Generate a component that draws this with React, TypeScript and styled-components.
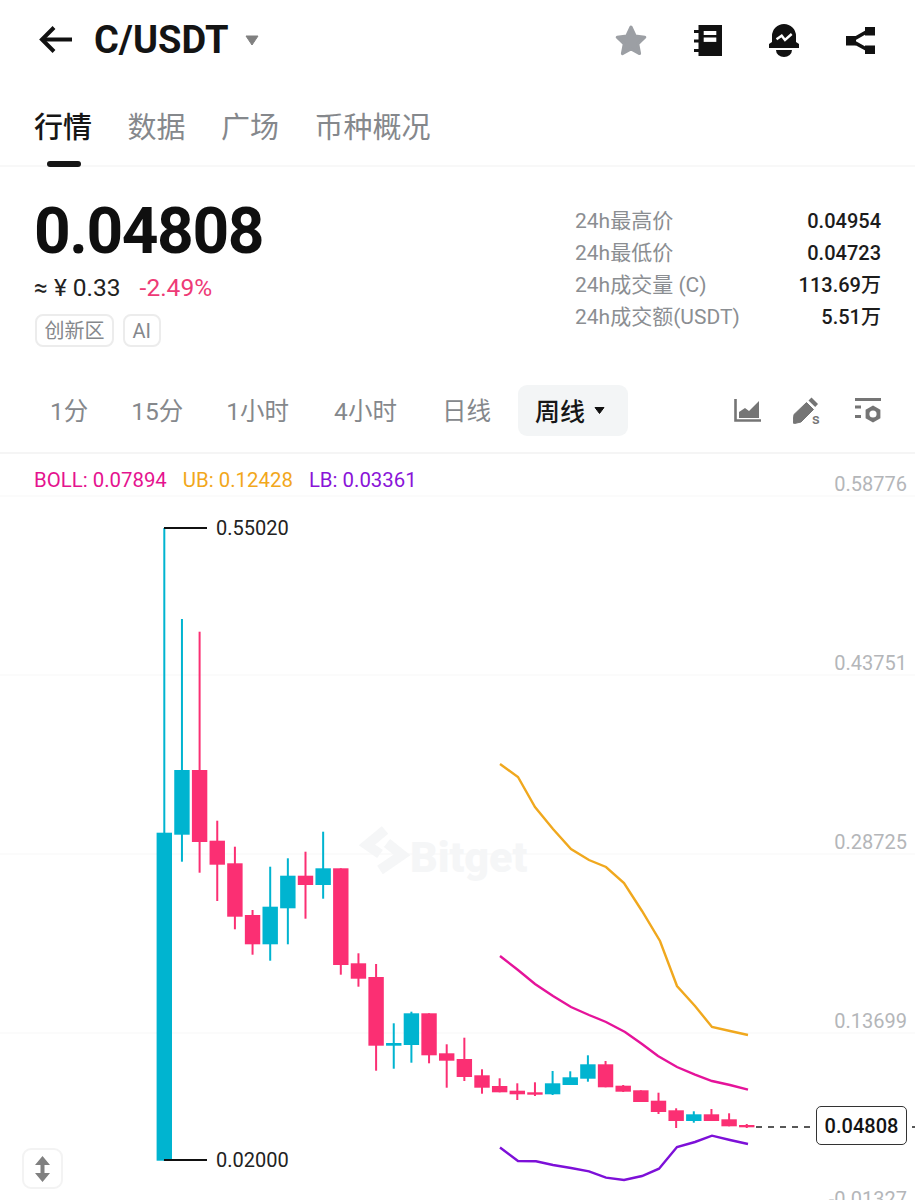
import React from "react";
import styled, { createGlobalStyle } from "styled-components";

const Global = createGlobalStyle`
  html, body { margin: 0; padding: 0; background: #fff; height: 1200px; overflow: hidden; }
  * { box-sizing: border-box; }
  body { font-family: Roboto, "Noto Sans CJK SC", sans-serif; }
`;

const Page = styled.div`
  width: 915px;
  height: 1200px;
  overflow: hidden;
  display: flex;
  flex-direction: column;
  color: #111;
  background: #fff;
`;

const Header = styled.header`
  height: 80px;
  flex: none;
  padding: 0 40px 0 38px;
  display: flex;
  align-items: center;
  justify-content: space-between;
`;
const TitleGroup = styled.div`
  display: flex;
  align-items: center;
`;
const Title = styled.h1`
  margin: 0 17px 0 21px;
  font: 700 38px/1 Roboto, sans-serif;
  color: #141414;
`;
const HeaderIcons = styled.div`
  display: flex;
  align-items: center;
  gap: 47px;
`;

const Tabs = styled.nav`
  height: 87px;
  flex: none;
  padding: 6px 0 0 34px;
  display: flex;
  gap: 35.5px;
  align-items: center;
  border-bottom: 2px solid #f8f8f8;
`;
const Tab = styled.span<{ $active?: boolean }>`
  position: relative;
  font: 500 29px/1 "Noto Sans CJK SC", sans-serif;
  color: ${(p) => (p.$active ? "#161616" : "#85888c")};
  font-weight: ${(p) => (p.$active ? 500 : 400)};
  ${(p) =>
    p.$active
      ? `&::after {
    content: "";
    position: absolute;
    left: 13px;
    bottom: -27px;
    width: 34px;
    height: 6px;
    border-radius: 3px;
    background: #161616;
  }`
      : ""}
`;

const Summary = styled.section`
  height: 205px;
  flex: none;
  padding: 0 34px 0 34px;
  display: flex;
  justify-content: space-between;
`;
const PriceColumn = styled.div`
  display: flex;
  flex-direction: column;
`;
const BigPrice = styled.div`
  margin-top: 33px;
  font: 700 64px/1 Roboto, sans-serif;
  letter-spacing: -1.4px;
  color: #0f0f0f;
`;
const SubRow = styled.div`
  margin-top: 9px;
  display: flex;
  gap: 19px;
  font: 400 24.5px/30px Roboto, sans-serif;
`;
const Fiat = styled.span`
  color: #222;
`;
const Change = styled.span`
  color: #ee3a76;
`;
const TagRow = styled.div`
  margin: 11px 0 0 1px;
  display: flex;
  gap: 9px;
`;
const Tag = styled.span`
  height: 33px;
  padding: 0 7.5px;
  display: flex;
  align-items: center;
  border: 2px solid #ececec;
  border-radius: 8px;
  font: 400 20px/1 Roboto, "Noto Sans CJK SC", sans-serif;
  color: #85888c;
`;
const Stats = styled.div`
  width: 306px;
  margin-top: 38px;
  display: grid;
  grid-template-columns: 1fr auto;
  grid-auto-rows: 32px;
  align-items: center;
`;
const StatLabel = styled.span`
  font: 400 21px/1 Roboto, "Noto Sans CJK SC", sans-serif;
  color: #8b8e92;
`;
const StatValue = styled.span`
  text-align: right;
  font: 500 20px/1 Roboto, "Noto Sans CJK SC", sans-serif;
  color: #1c1c1c;
`;

const Intervals = styled.div`
  height: 82px;
  flex: none;
  display: flex;
  align-items: flex-start;
  padding: 13px 34px 0 50px;
  border-bottom: 2px solid #f5f5f5;
`;
const Interval = styled.span<{ $gap: number }>`
  height: 51px;
  padding-top: 4px;
  margin-right: ${(p) => p.$gap}px;
  display: flex;
  align-items: center;
  font: 400 24.5px/1 Roboto, "Noto Sans CJK SC", sans-serif;
  color: #85888c;
`;
const ActiveInterval = styled.span`
  width: 110px;
  height: 51px;
  padding-left: 17px;
  gap: 9px;
  display: flex;
  align-items: center;
  background: #f3f5f6;
  border-radius: 9px;
  font: 500 25px/1 "Noto Sans CJK SC", sans-serif;
  color: #161616;
`;
const ToolIcons = styled.div`
  margin-left: auto;
  height: 51px;
  display: flex;
  align-items: center;
  gap: 32px;
`;

const Chart = styled.section`
  position: relative;
  flex: 1;
  min-height: 0;
`;
const Plot = styled.svg`
  position: absolute;
  inset: 0;
  display: block;
`;
const Legend = styled.div`
  position: relative;
  padding: 14px 0 0 34px;
  display: flex;
  gap: 16px;
  font: 400 20.4px/24px Roboto, sans-serif;
`;
const LegendItem = styled.span<{ $color: string }>`
  color: ${(p) => p.$color};
`;
const AxisLabel = styled.span<{ $y: number }>`
  position: absolute;
  right: 8px;
  top: ${(p) => p.$y - 455 - 10}px;
  font: 400 20px/24px Roboto, sans-serif;
  color: #b4b6b9;
`;
const ExtremeLabel = styled.span<{ $y: number }>`
  position: absolute;
  left: 216px;
  top: ${(p) => p.$y - 455 - 11}px;
  font: 400 20px/24px Roboto, sans-serif;
  color: #222;
`;
const PriceTag = styled.span`
  position: absolute;
  left: 816px;
  top: 652px;
  width: 91px;
  height: 39px;
  display: flex;
  align-items: center;
  justify-content: center;
  background: #fff;
  border: 1.5px solid #333;
  border-radius: 5px;
  font: 500 20px/1 Roboto, sans-serif;
  color: #141414;
`;
const Watermark = styled.span`
  position: absolute;
  left: 410px;
  top: 378px;
  font: 900 43px/50px Roboto, sans-serif;
  color: #f5f6f7;
`;
const ScaleButton = styled.button`
  position: absolute;
  left: 22px;
  top: 694px;
  width: 41px;
  height: 41px;
  padding: 0;
  display: flex;
  align-items: center;
  justify-content: center;
  background: #fff;
  border: 2px solid #f3f3f3;
  border-radius: 9px;
`;

const UP = "#00b4d0";
const DOWN = "#fb2f73";
type Candle = [number, number, number, number, number];
// isUp, wick top, body top, body bottom, wick bottom
const candles: Candle[] = [
  [1, 528, 832.7, 1160.7, 1160.7],
  [1, 619, 770, 834.7, 861.7],
  [0, 631.7, 770, 842, 872.7],
  [0, 820.7, 840.7, 864.7, 901],
  [0, 846.7, 863.3, 916.7, 929.3],
  [0, 910, 915, 944.3, 954.7],
  [1, 866.7, 906.7, 944.3, 960.7],
  [1, 858.3, 875.7, 908.3, 944.3],
  [0, 851.7, 875.7, 885, 918.7],
  [1, 831.7, 868.3, 885, 898.7],
  [0, 868.3, 868.3, 965, 974.7],
  [0, 953.3, 963.3, 978.7, 986.7],
  [0, 964, 977, 1045.7, 1070.7],
  [1, 1023.3, 1043, 1045.7, 1068.7],
  [1, 1011.7, 1013.3, 1045, 1062.7],
  [0, 1013.3, 1013.3, 1055.3, 1063.3],
  [0, 1044.3, 1053.3, 1060.7, 1087.7],
  [0, 1037.7, 1059, 1077, 1081],
  [0, 1069.3, 1075.3, 1087.7, 1093.7],
  [0, 1078.3, 1086, 1092.3, 1092.3],
  [0, 1083.3, 1090.7, 1094.3, 1100],
  [0, 1082.3, 1092.3, 1094.7, 1096],
  [1, 1071, 1083.3, 1094.3, 1095],
  [1, 1071.3, 1077.3, 1085, 1085],
  [1, 1055.3, 1064.3, 1078.7, 1081.7],
  [0, 1061, 1064.3, 1087.3, 1087.3],
  [0, 1085, 1085.7, 1091.7, 1092],
  [0, 1090.3, 1090.3, 1102, 1102],
  [0, 1092.7, 1100.7, 1112, 1114],
  [0, 1108.3, 1110.3, 1121, 1128],
  [1, 1111.3, 1114.3, 1121, 1122.7],
  [0, 1109, 1114.3, 1121, 1121],
  [0, 1113.3, 1119.3, 1126.3, 1126.3],
  [0, 1124, 1125, 1127.3, 1128],
];

const orange =
  "500,764 518,777 535,807 553,829 571,849 589,860 606,867 624,883 642,911 660,941 677,986 695,1006 712,1027 730,1031 748,1035";
const magenta =
  "500,956 518,970 535,984 553,996 571,1007 589,1015 606,1022 625,1032 642,1044 658,1056 677,1067 695,1074.6 712,1081 730,1085 748,1089.7";
const purple =
  "500,1147.5 518,1161 536,1161.3 553,1165 571,1168 589,1171.3 606,1177.7 624,1180 642,1176 659,1168.7 677,1147 695,1142 712,1135.7 730,1140 748,1144";

const BackIcon = () => (
  <svg width="35" height="30" viewBox="0 0 35 30" fill="none" stroke="#111" strokeWidth="4">
    <path d="M34 14.5H5" />
    <path d="M16 2.5L4 14.5L16 26.5" />
  </svg>
);
const TitleCaret = () => (
  <svg width="14" height="11" viewBox="0 0 14 11">
    <path d="M1 1H13L7 10Z" fill="#808080" stroke="#808080" strokeLinejoin="round" />
  </svg>
);
const StarIcon = () => (
  <svg width="32" height="31" viewBox="0 0 32 31">
    <path
      d="M16 2L20.2 11L29.8 12.2L22.8 19L24.6 28.6L16 24L7.4 28.6L9.2 19L2.2 12.2L11.8 11Z"
      fill="#9c9fa4"
      stroke="#9c9fa4"
      strokeWidth="3"
      strokeLinejoin="round"
    />
  </svg>
);
const NotebookIcon = () => (
  <svg width="28" height="31" viewBox="0 0 28 31">
    <path d="M4.5 0H28V31H4.5V27H0V24H4.5V17.5H0V14.5H4.5V8H0V5H4.5Z" fill="#111" />
    <rect x="9.7" y="6" width="12.6" height="4" fill="#fff" />
    <rect x="9.7" y="12.5" width="12.6" height="4.4" fill="#fff" />
  </svg>
);
const BellIcon = () => (
  <svg width="30" height="33" viewBox="0 0 30 33">
    <path d="M3 18V12A12 12 0 0 1 27 12V18L30 20V24H0V20Z" fill="#111" />
    <path d="M7.5 15.2L12.7 11.7L16 16L22.7 10" fill="none" stroke="#fff" strokeWidth="2.4" />
    <path d="M7 26H23A8 7 0 0 1 7 26Z" fill="#111" />
  </svg>
);
const ShareIcon = () => (
  <svg width="29" height="27" viewBox="0 0 29 27">
    <rect x="0" y="9" width="10" height="9.5" fill="#111" />
    <rect x="19" y="0" width="10" height="8.5" fill="#111" />
    <rect x="19" y="18.5" width="10" height="8.5" fill="#111" />
    <path d="M22 4L5 13.7L22 23" fill="none" stroke="#111" strokeWidth="3.6" />
  </svg>
);
const SmallCaret = () => (
  <svg width="11" height="9" viewBox="0 0 11 9">
    <path d="M1 1.5H10L5.5 7.5Z" fill="#111" stroke="#111" strokeLinejoin="round" />
  </svg>
);
const AreaIcon = () => (
  <svg width="27" height="23" viewBox="0 0 27 23" fill="none">
    <path d="M1.5 0V21.5H27" stroke="#757575" strokeWidth="2.6" />
    <path d="M5 19V13L11 9L15 12L25 2V19Z" fill="#757575" />
  </svg>
);
const PenIcon = () => (
  <svg width="30" height="34" viewBox="0 -3 30 34">
    <path d="M1 17.5L13.5 5.5L20.5 12.5L8 25L1.5 26.5Q0 26.5 0 25Z" fill="#757575" stroke="#757575" strokeLinejoin="round" />
    <path d="M15.5 3.5L18.5 0.5L25 7L22.2 10Z" fill="#757575" />
    <text x="19" y="27" fontSize="15" fontWeight="500" fontFamily="Roboto, sans-serif" fill="#757575">s</text>
  </svg>
);
const IndicatorIcon = () => (
  <svg width="26" height="25" viewBox="0 0 26 25">
    <rect width="26" height="3" fill="#757575" />
    <rect y="7.5" width="6" height="3" fill="#757575" />
    <rect y="17" width="6" height="3" fill="#757575" />
    <path d="M18 7.5L25.4 11.75V20.25L18 24.5L10.6 20.25V11.75Z" fill="#757575" />
    <circle cx="18" cy="16" r="3.6" fill="#fff" />
  </svg>
);
const ScaleIcon = () => (
  <svg width="15" height="26" viewBox="0 0 15 26">
    <path d="M7.5 0L15 9H9.5V17H15L7.5 26L0 17H5.5V9H0Z" fill="#808080" />
  </svg>
);

const stats = [
  ["24h最高价", "0.04954"],
  ["24h最低价", "0.04723"],
  ["24h成交量 (C)", "113.69万"],
  ["24h成交额(USDT)", "5.51万"],
];
const intervals: [string, number][] = [
  ["1分", 43],
  ["15分", 43],
  ["1小时", 45],
  ["4小时", 45],
  ["日线", 27],
];
const axis: [string, number][] = [
  ["0.58776", 483],
  ["0.43751", 662],
  ["0.28725", 841],
  ["0.13699", 1020],
  ["-0.01327", 1198],
];

export default function App() {
  return (
    <Page>
      <Global />
      <Header>
        <TitleGroup>
          <BackIcon />
          <Title>C/USDT</Title>
          <TitleCaret />
        </TitleGroup>
        <HeaderIcons>
          <StarIcon />
          <NotebookIcon />
          <BellIcon />
          <ShareIcon />
        </HeaderIcons>
      </Header>
      <Tabs>
        <Tab $active>行情</Tab>
        <Tab>数据</Tab>
        <Tab>广场</Tab>
        <Tab>币种概况</Tab>
      </Tabs>
      <Summary>
        <PriceColumn>
          <BigPrice>0.04808</BigPrice>
          <SubRow>
            <Fiat>≈ ¥ 0.33</Fiat>
            <Change>-2.49%</Change>
          </SubRow>
          <TagRow>
            <Tag>创新区</Tag>
            <Tag>AI</Tag>
          </TagRow>
        </PriceColumn>
        <Stats>
          {stats.map(([label, value]) => (
            <React.Fragment key={label}>
              <StatLabel>{label}</StatLabel>
              <StatValue>{value}</StatValue>
            </React.Fragment>
          ))}
        </Stats>
      </Summary>
      <Intervals>
        {intervals.map(([label, gap]) => (
          <Interval key={label} $gap={gap}>
            {label}
          </Interval>
        ))}
        <ActiveInterval>
          周线
          <SmallCaret />
        </ActiveInterval>
        <ToolIcons>
          <AreaIcon />
          <PenIcon />
          <IndicatorIcon />
        </ToolIcons>
      </Intervals>
      <Chart>
        <Plot width="915" height="746" viewBox="0 454 915 746">
          {[496, 675, 854, 1033].map((y) => (
            <line key={y} x1="0" x2="915" y1={y} y2={y} stroke="#fafafa" strokeWidth="1.5" />
          ))}
          <path
            d="M385 830L367 845L380 854M387 843L402 855L380 870"
            fill="none"
            stroke="#f5f6f7"
            strokeWidth="10"
          />
          {candles.map(([up, wt, top, bottom, wb], i) => {
            const x = 164.3 + 17.65 * i;
            const color = up ? UP : DOWN;
            return (
              <g key={i} fill={color}>
                <rect x={x - 1} y={wt} width="2" height={wb - wt} />
                <rect x={x - 7.7} y={top} width="15.4" height={bottom - top} />
              </g>
            );
          })}
          <polyline points={orange} fill="none" stroke="#f0a81e" strokeWidth="2.4" />
          <polyline points={magenta} fill="none" stroke="#e5139a" strokeWidth="2.4" />
          <polyline points={purple} fill="none" stroke="#7d10d8" strokeWidth="2.4" />
          <line x1="164" x2="207" y1="528" y2="528" stroke="#111" strokeWidth="2" />
          <line x1="164" x2="207" y1="1160" y2="1160" stroke="#111" strokeWidth="2" />
          <line x1="756" x2="915" y1="1127" y2="1127" stroke="#222" strokeWidth="1.3" strokeDasharray="6 6" />
        </Plot>
        <Legend>
          <LegendItem $color="#e5138f">BOLL: 0.07894</LegendItem>
          <LegendItem $color="#f2a71b">UB: 0.12428</LegendItem>
          <LegendItem $color="#8a14d8">LB: 0.03361</LegendItem>
        </Legend>
        <Watermark>Bitget</Watermark>
        {axis.map(([label, y]) => (
          <AxisLabel key={label} $y={y}>
            {label}
          </AxisLabel>
        ))}
        <ExtremeLabel $y={528}>0.55020</ExtremeLabel>
        <ExtremeLabel $y={1160}>0.02000</ExtremeLabel>
        <PriceTag>0.04808</PriceTag>
        <ScaleButton aria-label="scale">
          <ScaleIcon />
        </ScaleButton>
      </Chart>
    </Page>
  );
}
